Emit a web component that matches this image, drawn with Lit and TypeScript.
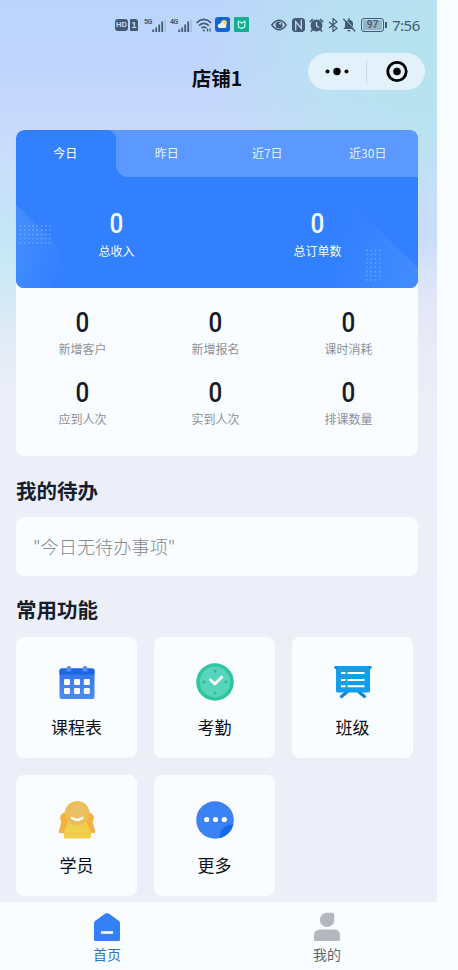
import { LitElement, html, css, svg } from "lit";
import { customElement } from "lit/decorators.js";

const calendar = svg`<svg viewBox="0 0 38 38" class="glyph">
  <defs><linearGradient id="a" x2="0" y2="1"><stop stop-color="#2f74ea"/><stop offset="1" stop-color="#4c8cf8"/></linearGradient></defs>
  <rect x="1.500" y="5.500" width="35" height="30.500" rx="2" fill="url(#a)"/>
  <path d="M1.500 11.500V7.500a2 2 0 0 1 2-2h31a2 2 0 0 1 2 2v4z" fill="#1b66e2"/>
  <path d="M8.500 5q0-2 2.400-2t2.400 2v3.500H8.500zM24.700 5q0-2 2.400-2t2.400 2v3.500h-4.800z" fill="#558fee"/>
  <g fill="#fff"><rect x="6" y="16" width="6" height="6" rx="1"/><rect x="16" y="16" width="6" height="6" rx="1"/><rect x="25.800" y="16" width="6" height="6" rx="1"/><rect x="6" y="25" width="6" height="6" rx="1"/><rect x="16" y="25" width="6" height="6" rx="1"/><rect x="25.800" y="25" width="6" height="6" rx="1"/></g></svg>`;

const clock = svg`<svg viewBox="0 0 38 38" class="glyph">
  <circle cx="19" cy="19" r="18.800" fill="#2fc5a0"/><circle cx="19" cy="19" r="15.300" fill="#56d5bd"/>
  <g fill="#32b99a"><circle cx="19" cy="8" r="1.500"/><circle cx="19" cy="30" r="1.500"/><circle cx="8" cy="19" r="1.500"/><circle cx="30" cy="19" r="1.500"/></g>
  <path d="M14.300 16.800l4.600 4.300 6.900-7" fill="none" stroke="#fff" stroke-width="2.800" stroke-linecap="round" stroke-linejoin="round"/></svg>`;

const board = svg`<svg viewBox="0 0 38 38" class="glyph">
  <path d="M13 29l-5.500 4.500M25 29l5.500 4.500" stroke="#1384d6" stroke-width="3.200" stroke-linecap="round"/>
  <path d="M2 4h34v24a1.500 1.500 0 0 1-1.500 1.500h-31A1.500 1.500 0 0 1 2 28z" fill="#119fec"/>
  <rect x=".3" y="3" width="37.400" height="3" rx="1.400" fill="#1286d0"/><path d="M3 3h32v3.200H3z" fill="#119fec"/>
  <path d="M7 10h4.500M7 17h4.500M7 23.200h4.500M13.500 10h17M13.500 17h17M13.500 23.200h17" stroke="#fff" stroke-width="2.100"/></svg>`;

const student = svg`<svg viewBox="0 0 38 38" class="glyph">
  <path d="M9 11c-5-.5-9 5-5.500 10L.7 30.500q0 1.500 1.500 1.500h33.600q1.500 0 1.500-1.500L34.500 21C38 16 34 10.500 29 11z" fill="#f3b240"/>
  <path d="M10.500 20h17.500l5 11V36q0 1.500-1.500 1.500h-24Q6 37.500 6 36v-5z" fill="#efd04e"/>
  <path d="M5.500 32.500h27.500" stroke="#f4bd45" stroke-width=".8"/>
  <circle cx="19.200" cy="12.300" r="12.300" fill="#efbd55"/><circle cx="19.200" cy="11.500" r="8" fill="#ebbf65"/>
  <path d="M14 17q5 3.700 10.500 0" fill="none" stroke="#fff" stroke-width="2.500" stroke-linecap="round"/></svg>`;

const more = svg`<svg viewBox="0 0 38 38" class="glyph">
  <circle cx="19" cy="19" r="18.800" fill="#3b82f4"/>
  <path d="M37.400 23.500A18.800 18.800 0 0 1 23.500 37.200C23 29 29 23 37.400 23.500z" fill="#146be8"/>
  <g fill="#fff"><circle cx="10.700" cy="18.500" r="2.600"/><circle cx="19.500" cy="18.500" r="2.600"/><circle cx="28.300" cy="18.500" r="2.600"/></g></svg>`;

const bars = svg`<svg width="14" height="12" viewBox="0 0 14 12"><path d="M1.200 9.500V12M4.200 7.500V12M7.200 4.500V12M10.200 1.500V12" stroke="#435a76" stroke-width="1.800"/><path d="M13.200 0V12" stroke="#a3b5d5" stroke-width="1.200"/></svg>`;

@customElement("app-root")
export class AppRoot extends LitElement {
  static styles = css`
    :host { display: block; width: 458px; height: 970px; overflow: hidden; background: #fafdff; font-family: "Noto Sans CJK SC", sans-serif; color: #171d2c; }
    * { box-sizing: border-box; }
    svg { display: block; flex: none; }
    .page { width: 437px; height: 902px; padding: 0 19px 0 16px;
      background:
        linear-gradient(to bottom, transparent 240px, #eceff7 430px),
        radial-gradient(ellipse 60px 130px at 0 265px, #c1e9f5 0, #c1e9f500 100%),
        radial-gradient(ellipse 230px 170px at 437px 55px, #b5e3ee 0, #b8e3f0cc 50%, #b8e3f000 100%),
        linear-gradient(to bottom, #bad5fb 0, #c1d5fc 70px, #cbdcfb 150px, #cbdcfa 240px, #dee3f8 300px, #eceff7 450px); }
    .status { height: 48px; margin-right: -19px; padding: 1px 17px 0 99px; display: flex; align-items: center; color: #435a76; }
    .hd { width: 13px; height: 12px; border-radius: 3px; background: #435a76; color: #c4d8fb; font: bold 7.5px/12px "Liberation Sans", sans-serif; text-align: center; }
    .sim { width: 8px; height: 12px; margin-left: 2px; border-radius: 1px 3px 1px 1px; background: #435a76; color: #c4d8fb; font: bold 9px/12px "Liberation Sans", sans-serif; text-align: center; }
    .net { display: flex; height: 14px; align-items: flex-end; }
    .net span { font: bold 7px/8px "Roboto", sans-serif; align-self: flex-start; width: 8px; letter-spacing: -.4px; }
    .n5 { margin-left: 6px; } .n4 { margin-left: 4px; }
    .wifi { margin-left: 4px; } .cloud { margin-left: 3px; } .mi { margin-left: 4px; }
    .eye { margin-left: 22px; } .nfc { margin-left: 5px; } .alarm { margin-left: 4px; } .bt { margin-left: 4px; } .bell { margin-left: 4px; }
    .bat { margin-left: 5px; width: 23px; height: 14px; border: 1.5px solid #435a76; border-radius: 3px; padding: 1px; }
    .bat span { display: block; height: 10px; border-radius: 1px; background: #98b4c4; font: 500 10px/10px Roboto, sans-serif; text-align: center; }
    .nub { width: 2px; height: 6px; background: #435a76; margin-left: 1px; }
    .time { margin-left: 5px; font: 15px/20px "Noto Sans", sans-serif; letter-spacing: -.5px; }
    .top { height: 82px; margin-right: -19px; padding: 5px 12px 0 0; display: grid; grid-template-columns: 1fr auto 1fr; align-items: start; }
    .title { grid-column: 2; margin: 11px 0 0; font-size: 19.5px; line-height: 28px; font-weight: 700; color: #0b0e15; padding-right: 7px; }
    .capsule { justify-self: end; width: 117px; height: 37px; border-radius: 19px; background: #e3f1fb; display: flex; align-items: center; }
    .card { height: 326px; border-radius: 8px; background: #fafdff; overflow: hidden; }
    .hero { height: 158px; border-radius: 8px; overflow: hidden; background: #3380ff; color: #f5fcff; position: relative; }
    .deco { position: absolute; inset: 0; }
    .tabs { position: relative; display: flex; height: 47px; }
    .tabs::before { content: ""; position: absolute; inset: 0 0 0 100px; background: #5b98ff; border-bottom-left-radius: 12px; }
    .tabs::after { content: ""; position: absolute; left: 92px; top: 0; width: 16px; height: 16px; background: radial-gradient(circle at 0 8px, transparent 7.5px, #5b98ff 8px) 0 0 / 8px 8px no-repeat; }
    .tab { position: relative; flex: 1; text-align: center; font-size: 12px; line-height: 46px; color: #e6f1ff; }
    .on { color: #fff; right: 1px; }
    .totals { position: relative; display: flex; padding-top: 31px; }
    .stat { flex: 1; text-align: center; font-size: 12px; line-height: 18px; }
    .num { display: block; font: 500 27.5px/32px Roboto, sans-serif; margin-bottom: 2px; transform: scaleX(.88); }
    .grid { width: 399px; display: grid; grid-template-columns: repeat(3, 1fr); padding-top: 19px; row-gap: 19px; }
    .grid .stat { color: #8c909a; line-height: 18px; }
    .grid .num { color: #171b29; margin-bottom: 1px; }
    h2 { margin: 0; font-size: 20.5px; line-height: 30px; font-weight: 700; }
    .h-a { padding-top: 19px; height: 61px; }
    .h-b { padding-top: 18px; height: 61px; }
    .todo { height: 59px; border-radius: 8px; background: #fafdff; padding-left: 17px; font-size: 18.2px; line-height: 58px; color: #85888e; font-weight: 300; }
    .tiles { display: grid; grid-template-columns: repeat(3, 121px); grid-auto-rows: 121px; gap: 17px; }
    .tile { background: #fafdff; border-radius: 8px; display: flex; flex-direction: column; align-items: center; padding-top: 26px; font-size: 17px; line-height: 26px; gap: 13px; color: #0c0f18; }
    .glyph { width: 38px; height: 38px; overflow: visible; }
    .nav { display: flex; width: 440px; height: 68px; background: #fafdff; }
    .item { width: 220px; flex: none; display: flex; flex-direction: column; align-items: center; padding: 10px 6px 0 0; font-size: 14px; line-height: 20px; gap: 2px; color: #62666f; }
    .cur { color: #3374c8; }
  `;

  stat(label: string) {
    return html`<div class="stat"><span class="num">0</span>${label}</div>`;
  }

  dots(x: number, y: number, cols: number, rows: number) {
    return Array.from({ length: cols * rows }, (_, i) =>
      svg`<circle cx=${x + (i % cols) * 4.2} cy=${y + Math.floor(i / cols) * 4.2} r=".9"/>`);
  }

  render() {
    const tiles = [["课程表", calendar], ["考勤", clock], ["班级", board], ["学员", student], ["更多", more]];
    return html`
      <main class="page">
        <div class="status">
          <span class="hd">HD</span><span class="sim">1</span>
          <span class="net n5"><span>5G</span>${bars}</span>
          <span class="net n4"><span>4G</span>${bars}</span>
          <svg class="wifi" width="16" height="14" viewBox="0 0 16 14" fill="none" stroke="#435a76" stroke-width="1.700"><path d="M.6 4.800Q7.700-1.900 15.200 4.800M3 7.600q4.800-4.400 9.800 0M5.400 10.200q2.500-2.200 5 0"/><path d="M7 12.500h2" stroke-width="1.600"/><path d="M11.500 10.500v3M14 10.500v3" stroke-width="1.300"/></svg>
          <svg class="cloud" width="15" height="15" viewBox="0 0 15 15"><rect width="15" height="15" rx="3" fill="#1265d5"/><circle cx="9" cy="6" r="2.900" fill="#ffd65f"/><path d="M4.800 11a2 2 0 0 1-.2-4 2.800 2.800 0 0 1 5.200.6 1.800 1.800 0 0 1 .6 3.400z" fill="#f1f8ff"/></svg>
          <svg class="mi" width="15" height="15" viewBox="0 0 15 15"><rect width="15" height="15" rx="1" fill="#12ae8e"/><path d="M4.300 3.600v5q0 2.500 2.500 2.500h1.600q2.500 0 2.500-2.500v-5M4.300 5h2l1.300 1.200L8.900 5h2" fill="none" stroke="#dffff5" stroke-width="1.100"/></svg>
          <svg class="eye" width="16" height="12" viewBox="0 0 16 12"><path d="M.8 6Q8-3.500 15.200 6 8 15.500.8 6z" fill="none" stroke="#435a76" stroke-width="1.500"/><circle cx="8" cy="6" r="3.500" fill="#435a76"/><circle cx="9.200" cy="4.600" r="1.100" fill="#bddcf4"/></svg>
          <svg class="nfc" width="13" height="14" viewBox="0 0 13 14"><rect width="13" height="14" rx="3.500" fill="#435a76"/><path d="M3.700 12.500V3.500l5.600 7V1.500" fill="none" stroke="#bddcf4" stroke-width="1.300"/></svg>
          <svg class="alarm" width="15" height="14" viewBox="0 0 15 14"><circle cx="7.500" cy="7.500" r="5.900" fill="#435a76"/><path d="M.8 4L4 1M14.200 4L11 1M3.600 11.500L2 13.500M11.400 11.500l1.600 2" stroke="#435a76" stroke-width="1.700"/><path d="M7.500 4v4l2.500 1.600" fill="none" stroke="#bddcf4" stroke-width="1.300"/></svg>
          <svg class="bt" width="10" height="14" viewBox="0 0 10 14"><path d="M1 4l8 6.200-4 3.200V.6l4 3.200L1 10" fill="none" stroke="#435a76" stroke-width="1.300"/></svg>
          <svg class="bell" width="14" height="14" viewBox="0 0 14 14"><path d="M1.500 11l1.500-2V6a4 4 0 0 1 8 0v3l1.500 2zM5.500 12h3a1.500 1.500 0 0 1-3 0zM6.300 0h1.400v2H6.300z" fill="#435a76"/><path d="M2.200.3l12 12.500" stroke="#b9def0" stroke-width="1"/><path d="M1.200.8l12 12.700" stroke="#435a76" stroke-width="1.300"/></svg>
          <span class="bat"><span>97</span></span><i class="nub"></i>
          <span class="time">7:56</span>
        </div>
        <header class="top">
          <h1 class="title">店铺1</h1>
          <div class="capsule">
            <svg width="117" height="37" viewBox="0 0 117 37"><circle cx="19.500" cy="18.500" r="2"/><circle cx="29" cy="18.500" r="3.700"/><circle cx="38.500" cy="18.500" r="2"/><path d="M58.500 7v23" stroke="#c9dce9"/><circle cx="89" cy="18.500" r="9.200" fill="none" stroke="#000" stroke-width="2.800"/><circle cx="89" cy="18.500" r="3.800"/></svg>
          </div>
        </header>
        <section class="card">
          <div class="hero">
            <svg class="deco" width="402" height="158" viewBox="0 0 402 158">
              <defs>
                <linearGradient id="l" gradientUnits="userSpaceOnUse" x1="0" y1="100" x2="52" y2="112"><stop stop-color="#438dff"/><stop offset="1" stop-color="#3380ff"/></linearGradient>
                <linearGradient id="r" gradientUnits="userSpaceOnUse" x1="402" y1="140" x2="325" y2="120"><stop stop-color="#428cff"/><stop offset="1" stop-color="#3380ff"/></linearGradient>
              </defs>
              <path d="M0 74L75 149v9H0z" fill="url(#l)"/><path d="M333 71L402 138v20H246z" fill="url(#r)"/>
              <g fill="#9bc6ff" opacity=".5">${this.dots(4.5, 96, 8, 5)}</g>
              <g fill="#9bc6ff" opacity=".4">${this.dots(351, 120.5, 4, 8)}</g>
            </svg>
            <nav class="tabs"><span class="tab on">今日</span><span class="tab">昨日</span><span class="tab">近7日</span><span class="tab">近30日</span></nav>
            <div class="totals">${["总收入", "总订单数"].map((t) => this.stat(t))}</div>
          </div>
          <div class="grid">${["新增客户", "新增报名", "课时消耗", "应到人次", "实到人次", "排课数量"].map((t) => this.stat(t))}</div>
        </section>
        <h2 class="h-a">我的待办</h2>
        <div class="todo">"今日无待办事项"</div>
        <h2 class="h-b">常用功能</h2>
        <div class="tiles">${tiles.map(([name, icon]) => html`<div class="tile">${icon}<span>${name}</span></div>`)}</div>
      </main>
      <nav class="nav">
        <div class="item cur">
          <svg width="28" height="30" viewBox="0 0 28 30"><path d="M12.300 1.500q1.700-1.200 3.400 0L26 9q1 .8 1 2v16.500q0 1.500-1.500 1.500h-23Q1 29 1 27.500V11q0-1.200 1-2z" fill="#3380f8"/><path d="M8 20.500h12" stroke="#fff" stroke-width="2.600"/></svg>首页
        </div>
        <div class="item">
          <svg width="28" height="30" viewBox="0 0 28 30" fill="#b4b7c0"><path d="M14 .7h5q2.300 0 2.300 2.300v5A7.200 7.200 0 1 1 14 .7zM7 17.500h14q6 0 6 6v4q0 1.500-1.500 1.500h-23Q1 29 1 27.500v-4q0-6 6-6z"/></svg>我的
        </div>
      </nav>`;
  }
}
